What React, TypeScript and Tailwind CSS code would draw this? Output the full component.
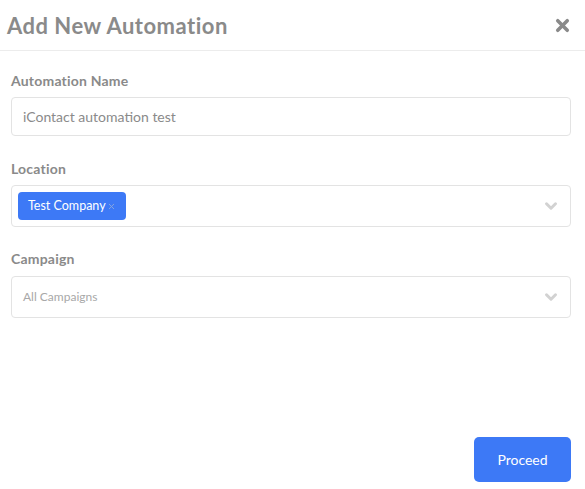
import { X, ChevronDown } from "lucide-react";

export default function App() {
  return (
    <div
      className="flex h-[489px] w-[585px] flex-col bg-white"
      style={{ fontFamily: "Lato, 'Open Sans', sans-serif" }}
    >
      {/* Header */}
      <div className="flex h-[51px] items-center justify-between border-b border-[#ececec] pl-[7px] pr-[13px]">
        <h2 className="text-[22px] font-bold tracking-[0.5px] text-[#8a8a8a]">Add New Automation</h2>
        <X className="h-[19px] w-[19px] text-[#8a8a8a]" strokeWidth={4.5} />
      </div>

      {/* Form */}
      <div className="flex flex-1 flex-col px-[11px] pr-[14px] pt-[21px]">
        <label className="mb-[7px] text-[14px] font-bold leading-[18px] tracking-[0.2px] text-[#8a8a8a]">
          Automation Name
        </label>
        <div className="flex h-[39px] items-center rounded-[4px] border border-[#e3e3e3] px-[11px] text-[14px] text-[#8a8a8a]">
          iContact automation test
        </div>

        <label className="mb-[7px] mt-[24px] text-[14px] font-bold leading-[18px] tracking-[0.2px] text-[#8a8a8a]">
          Location
        </label>
        <div className="flex h-[42px] items-center justify-between rounded-[4px] border border-[#e3e3e3] pl-[6px] pr-[10px]">
          <span className="flex h-[28px] items-center rounded-[4px] bg-[#3d79f6] pl-[10px] pr-[10px] text-[12.5px] text-white">
            Test Company
            <X className="ml-[1px] h-[9px] w-[9px] text-[#8aa6dd]" strokeWidth={2.5} />
          </span>
          <ChevronDown className="h-[18px] w-[18px] text-[#d2d2d2]" strokeWidth={4} />
        </div>

        <label className="mb-[8px] mt-[23px] text-[14px] font-bold leading-[18px] tracking-[0.2px] text-[#8a8a8a]">
          Campaign
        </label>
        <div className="flex h-[42px] items-center justify-between rounded-[4px] border border-[#e3e3e3] pl-[11px] pr-[10px]">
          <span className="text-[12px] text-[#a8a8a8]">All Campaigns</span>
          <ChevronDown className="h-[18px] w-[18px] text-[#d2d2d2]" strokeWidth={4} />
        </div>

        <div className="mt-auto mb-[7px] flex justify-end">
          <button className="h-[45px] w-[97px] rounded-[5px] bg-[#3d79f6] text-[14px] text-white">
            Proceed
          </button>
        </div>
      </div>
    </div>
  );
}
